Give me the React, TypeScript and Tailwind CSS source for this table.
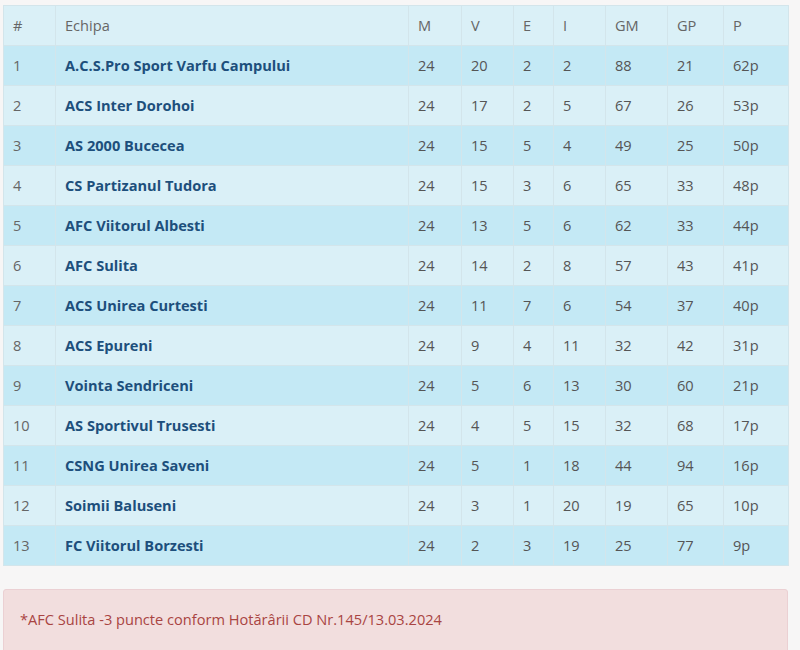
const rows: [number, string, number, number, number, number, number, number, string][] = [
  [1, "A.C.S.Pro Sport Varfu Campului", 24, 20, 2, 2, 88, 21, "62p"],
  [2, "ACS Inter Dorohoi", 24, 17, 2, 5, 67, 26, "53p"],
  [3, "AS 2000 Bucecea", 24, 15, 5, 4, 49, 25, "50p"],
  [4, "CS Partizanul Tudora", 24, 15, 3, 6, 65, 33, "48p"],
  [5, "AFC Viitorul Albesti", 24, 13, 5, 6, 62, 33, "44p"],
  [6, "AFC Sulita", 24, 14, 2, 8, 57, 43, "41p"],
  [7, "ACS Unirea Curtesti", 24, 11, 7, 6, 54, 37, "40p"],
  [8, "ACS Epureni", 24, 9, 4, 11, 32, 42, "31p"],
  [9, "Vointa Sendriceni", 24, 5, 6, 13, 30, 60, "21p"],
  [10, "AS Sportivul Trusesti", 24, 4, 5, 15, 32, 68, "17p"],
  [11, "CSNG Unirea Saveni", 24, 5, 1, 18, 44, 94, "16p"],
  [12, "Soimii Baluseni", 24, 3, 1, 20, 19, 65, "10p"],
  [13, "FC Viitorul Borzesti", 24, 2, 3, 19, 25, 77, "9p"],
];

const headers = ["#", "Echipa", "M", "V", "E", "I", "GM", "GP", "P"];

export default function App() {
  const cell = "h-10 border border-[#d3e5eb] px-[9px] align-middle";
  return (
    <div
      className="min-h-screen bg-[#f7f6f6] pt-[5px] pl-[3px] pr-[13px] text-[14.6px] text-[#555]"
      style={{ fontFamily: '"Open Sans", "Liberation Sans", sans-serif' }}
    >
      <table className="w-[785px] table-fixed border-collapse">
        <colgroup>
          <col className="w-[52px]" />
          <col className="w-[353px]" />
          <col className="w-[53px]" />
          <col className="w-[52px]" />
          <col className="w-[40px]" />
          <col className="w-[52px]" />
          <col className="w-[62px]" />
          <col className="w-[56px]" />
          <col className="w-[65px]" />
        </colgroup>
        <thead>
          <tr className="bg-[#daf0f7] text-left">
            {headers.map((h) => (
              <th key={h} className={`${cell} font-normal text-[#666]`}>
                {h}
              </th>
            ))}
          </tr>
        </thead>
        <tbody>
          {rows.map((r) => (
            <tr key={r[0]} className={r[0] % 2 ? "bg-[#c4e9f5]" : "bg-[#daf0f7]"}>
              <td className={`${cell} text-[#666]`}>{r[0]}</td>
              <td className={`${cell} font-bold text-[#1d4f7c]`}>{r[1]}</td>
              {r.slice(2).map((v, i) => (
                <td key={i} className={`${cell} text-[#555]`}>
                  {v}
                </td>
              ))}
            </tr>
          ))}
        </tbody>
      </table>

      <div className="mt-[23px] h-[80px] w-[785px] rounded-[3px] border border-[#ebd0d3] bg-[#f2dede] px-4 pt-[19px] text-[#a94442]">
        *AFC Sulita -3 puncte conform Hotărârii CD Nr.145/13.03.2024
      </div>
    </div>
  );
}
